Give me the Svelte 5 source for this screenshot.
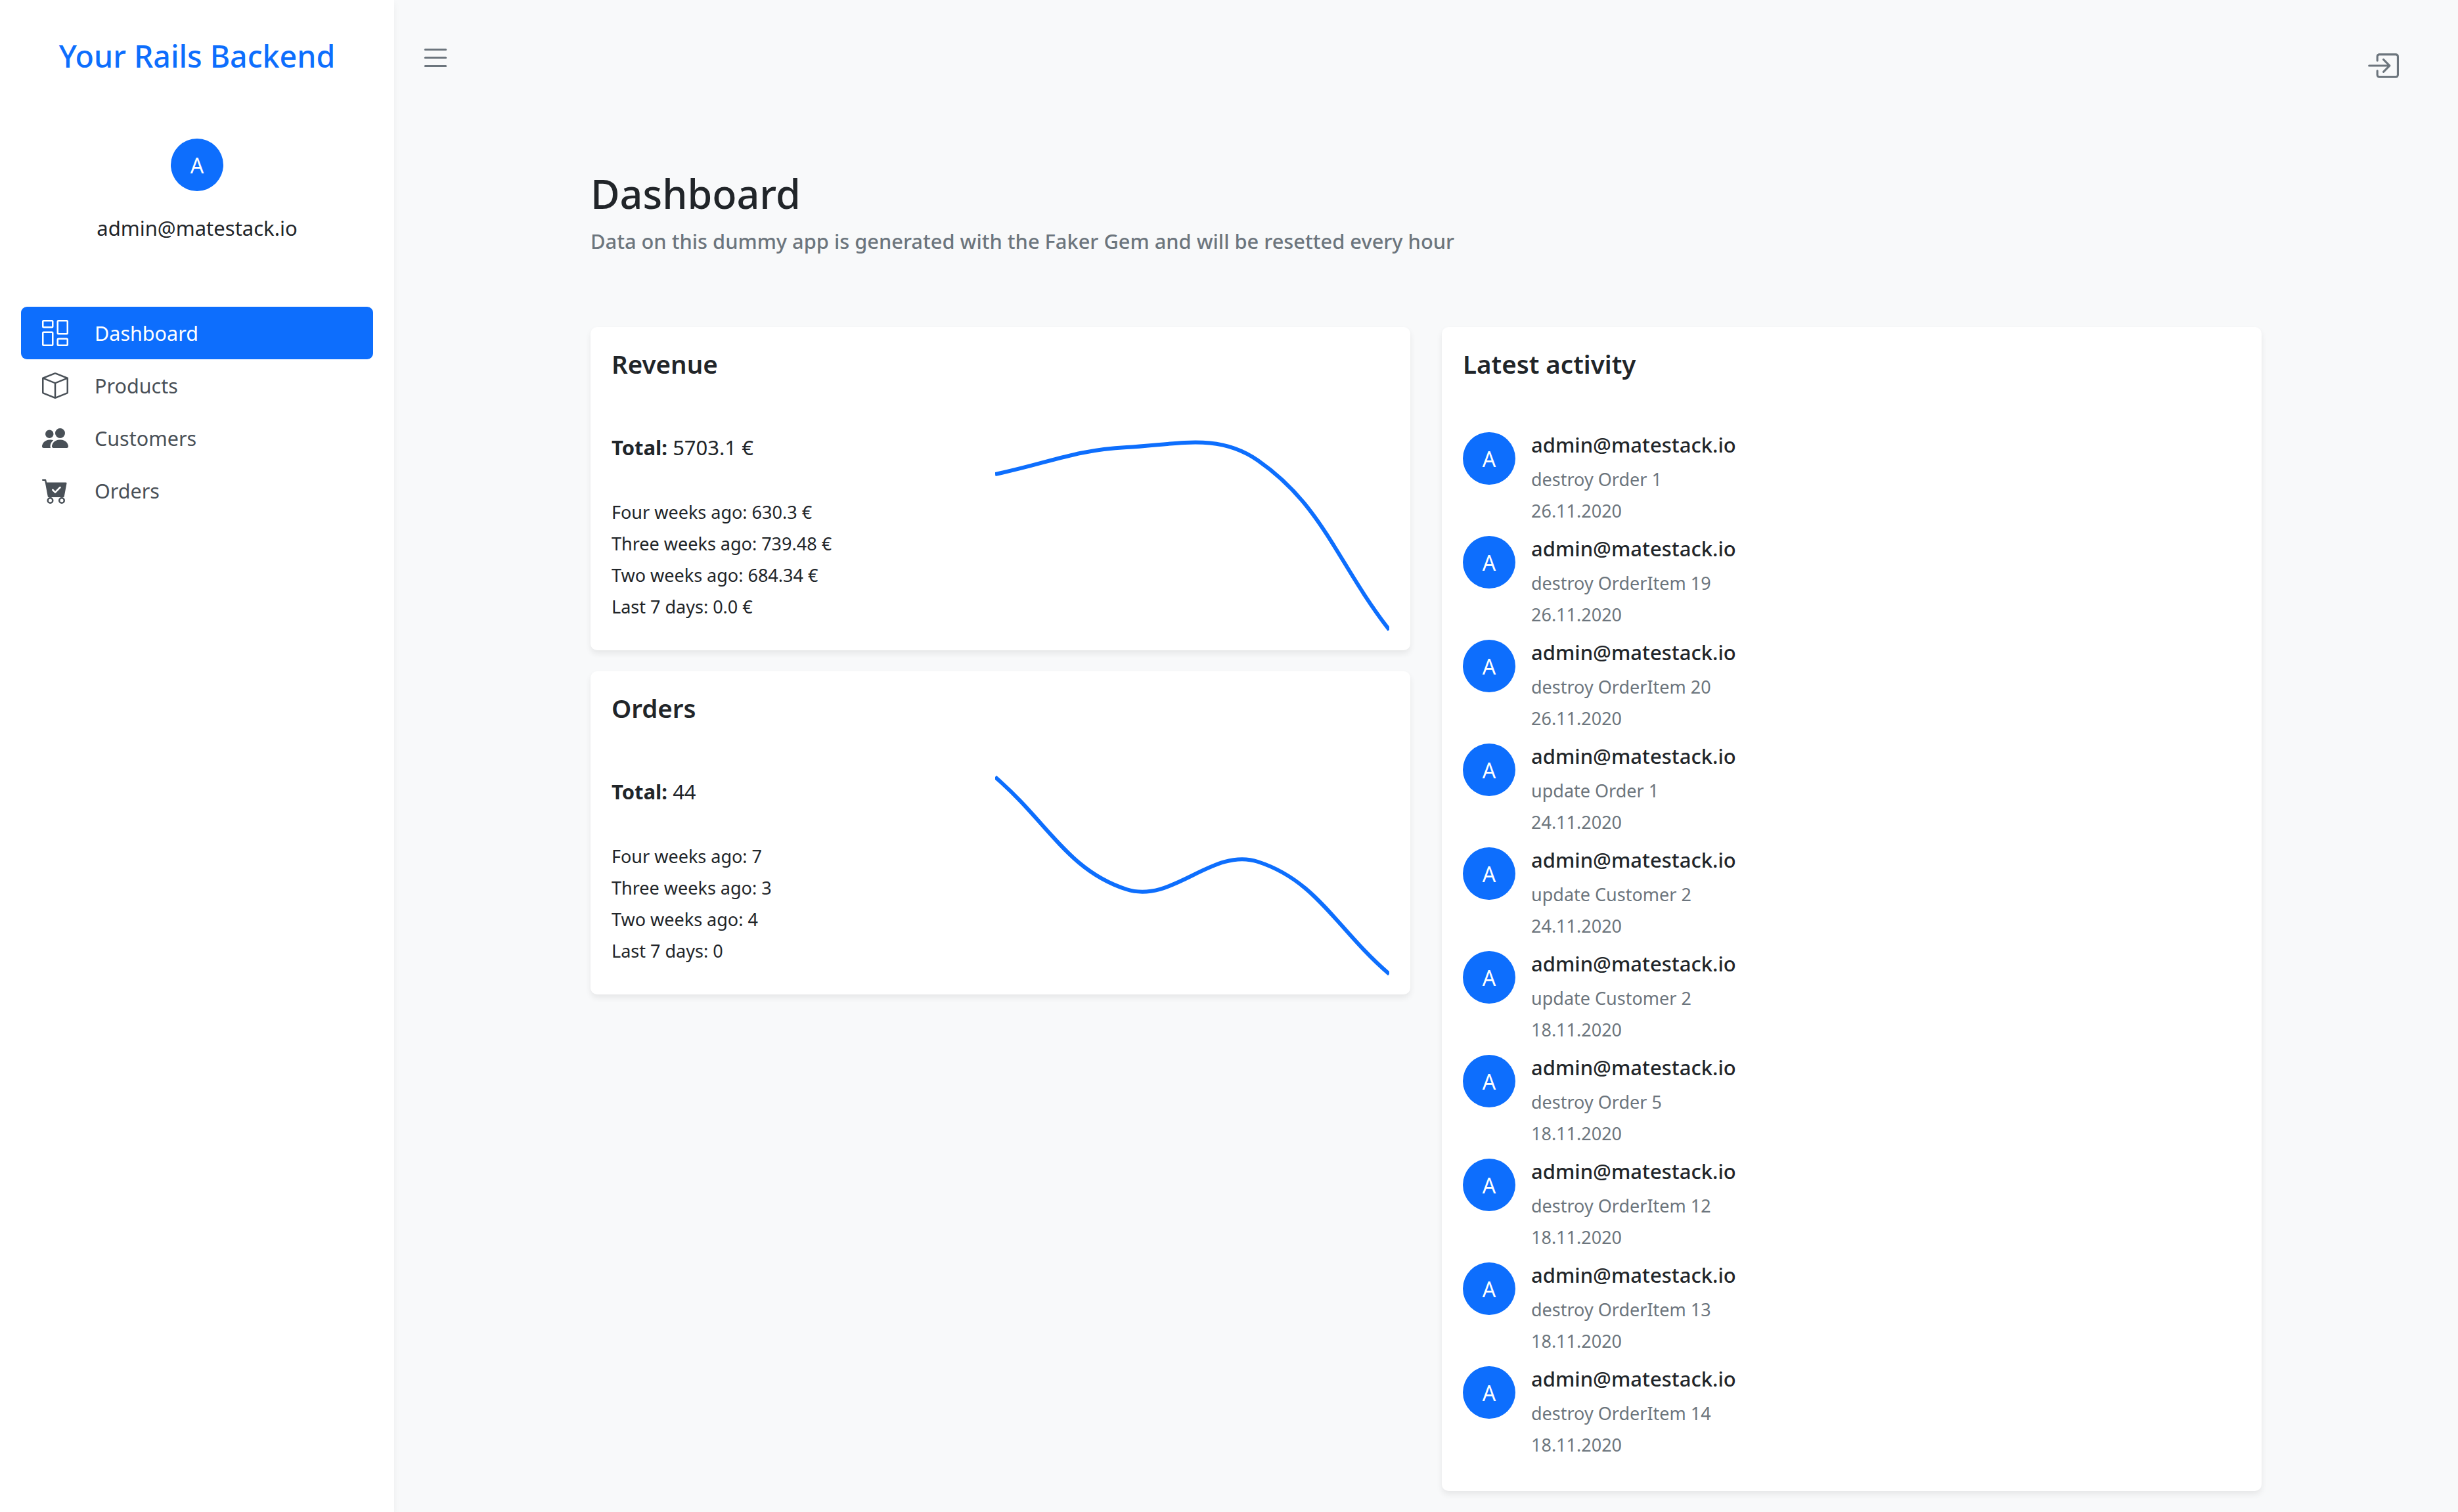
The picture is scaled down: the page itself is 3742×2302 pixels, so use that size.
<script>
  const navItems = [
    { label: "Dashboard", active: true, icon: "M6 1v3H1V1h5zM1 0a1 1 0 0 0-1 1v3a1 1 0 0 0 1 1h5a1 1 0 0 0 1-1V1a1 1 0 0 0-1-1H1zm14 12v3h-5v-3h5zm-5-1a1 1 0 0 0-1 1v3a1 1 0 0 0 1 1h5a1 1 0 0 0 1-1v-3a1 1 0 0 0-1-1h-5zM6 8v7H1V8h5zM1 7a1 1 0 0 0-1 1v7a1 1 0 0 0 1 1h5a1 1 0 0 0 1-1V8a1 1 0 0 0-1-1H1zm14-6v7h-5V1h5zm-5-1a1 1 0 0 0-1 1v7a1 1 0 0 0 1 1h5a1 1 0 0 0 1-1V1a1 1 0 0 0-1-1h-5z" },
    { label: "Products", icon: "M8.186 1.113a.5.5 0 0 0-.372 0L1.846 3.5 8 5.961 14.154 3.5 8.186 1.113zM15 4.239l-6.5 2.6v7.922l6.5-2.6V4.24zM7.5 14.762V6.838L1 4.239v7.925l6.5 2.6zM7.443.184a1.5 1.5 0 0 1 1.114 0l7.129 2.852A.5.5 0 0 1 16 3.5v8.662a1 1 0 0 1-.629.928l-7.185 2.874a.5.5 0 0 1-.372 0L.63 13.09a1 1 0 0 1-.63-.928V3.5a.5.5 0 0 1 .314-.464L7.443.184z" },
    { label: "Customers", icon: "M7 14s-1 0-1-1 1-4 5-4 5 3 5 4-1 1-1 1H7zm4-6a3 3 0 1 0 0-6 3 3 0 0 0 0 6zM5.216 14A2.238 2.238 0 0 1 5 13c0-1.355.68-2.75 1.936-3.72A6.325 6.325 0 0 0 5 9c-4 0-5 3-5 4s1 1 1 1h4.216zM4.5 8a2.5 2.5 0 1 0 0-5 2.5 2.5 0 0 0 0 5z" },
    { label: "Orders", icon: "M.5 1a.5.5 0 0 0 0 1h1.11l.401 1.607 1.498 7.985A.5.5 0 0 0 4 12h1a2 2 0 1 0 0 4 2 2 0 0 0 0-4h7a2 2 0 1 0 0 4 2 2 0 0 0 0-4h1a.5.5 0 0 0 .491-.408l1.5-8A.5.5 0 0 0 14.5 3H2.89l-.405-1.621A.5.5 0 0 0 2 1H.5zM6 14a1 1 0 1 1-2 0 1 1 0 0 1 2 0zm7 0a1 1 0 1 1-2 0 1 1 0 0 1 2 0zm-1.646-7.646-3 3a.5.5 0 0 1-.708 0l-1.5-1.5a.5.5 0 1 1 .708-.708L8 8.293l2.646-2.647a.5.5 0 0 1 .708.708z" }
  ];

  const listIcon = "M2.5 12a.5.5 0 0 1 .5-.5h10a.5.5 0 0 1 0 1H3a.5.5 0 0 1-.5-.5zm0-4a.5.5 0 0 1 .5-.5h10a.5.5 0 0 1 0 1H3a.5.5 0 0 1-.5-.5zm0-4a.5.5 0 0 1 .5-.5h10a.5.5 0 0 1 0 1H3a.5.5 0 0 1-.5-.5z";
  const loginIcon = "M6 3.5a.5.5 0 0 1 .5-.5h8a.5.5 0 0 1 .5.5v9a.5.5 0 0 1-.5.5h-8a.5.5 0 0 1-.5-.5v-2a.5.5 0 0 0-1 0v2A1.5 1.5 0 0 0 6.5 14h8a1.5 1.5 0 0 0 1.5-1.5v-9A1.5 1.5 0 0 0 14.5 2h-8A1.5 1.5 0 0 0 5 3.5v2a.5.5 0 0 0 1 0v-2zM11.854 8.354a.5.5 0 0 0 0-.708l-3-3a.5.5 0 1 0-.708.708L10.293 7.5H1.5a.5.5 0 0 0 0 1h8.793l-2.147 2.146a.5.5 0 0 0 .708.708l3-3z";

  const charts = [
    {
      title: "Revenue",
      total: "5703.1 €",
      rows: ["Four weeks ago: 630.3 €", "Three weeks ago: 739.48 €", "Two weeks ago: 684.34 €", "Last 7 days: 0.0 €"],
      ys: [82, 41, 61, 319]
    },
    {
      title: "Orders",
      total: "44",
      rows: ["Four weeks ago: 7", "Three weeks ago: 3", "Two weeks ago: 4", "Last 7 days: 0"],
      ys: [19, 190, 148, 319]
    }
  ];

  const activities = [
    ["destroy Order 1", "26.11.2020"],
    ["destroy OrderItem 19", "26.11.2020"],
    ["destroy OrderItem 20", "26.11.2020"],
    ["update Order 1", "24.11.2020"],
    ["update Customer 2", "24.11.2020"],
    ["update Customer 2", "18.11.2020"],
    ["destroy Order 5", "18.11.2020"],
    ["destroy OrderItem 12", "18.11.2020"],
    ["destroy OrderItem 13", "18.11.2020"],
    ["destroy OrderItem 14", "18.11.2020"]
  ];

  // same spline the chart library draws: tension 0.4 between evenly spaced points
  function linePath(ys) {
    const pts = ys.map((y, i) => ({ x: i * 200, y }));
    const t = 0.4;
    const ctrl = pts.map((p, i) => {
      const prev = pts[i - 1] || p;
      const next = pts[i + 1] || p;
      const d01 = Math.hypot(p.x - prev.x, p.y - prev.y);
      const d12 = Math.hypot(next.x - p.x, next.y - p.y);
      const sum = d01 + d12;
      const fa = (t * d01) / sum;
      const fb = (t * d12) / sum;
      return {
        inX: p.x - fa * (next.x - prev.x),
        inY: p.y - fa * (next.y - prev.y),
        outX: p.x + fb * (next.x - prev.x),
        outY: p.y + fb * (next.y - prev.y)
      };
    });
    let d = `M${pts[0].x} ${pts[0].y}`;
    for (let i = 1; i < pts.length; i++) {
      d += ` C${ctrl[i - 1].outX} ${ctrl[i - 1].outY} ${ctrl[i].inX} ${ctrl[i].inY} ${pts[i].x} ${pts[i].y}`;
    }
    return d;
  }
</script>

<div class="layout">
  <aside class="sidebar">
    <div class="brand">Your Rails Backend</div>
    <div class="avatar user-avatar">A</div>
    <div class="user-mail">admin@matestack.io</div>
    <nav>
      {#each navItems as item}
        <a class="nav-link" class:active={item.active} href="#top">
          <svg class="nav-icon" viewBox="0 0 16 16" fill="currentColor"><path d={item.icon} /></svg>
          <span>{item.label}</span>
        </a>
      {/each}
    </nav>
  </aside>

  <div class="main">
    <header class="topbar">
      <svg class="menu-icon" viewBox="0 0 16 16" fill="currentColor"><path fill-rule="evenodd" d={listIcon} /></svg>
      <svg class="login-icon" viewBox="0 0 16 16" fill="currentColor"><path fill-rule="evenodd" d={loginIcon} /></svg>
    </header>

    <main class="content">
      <h1>Dashboard</h1>
      <p class="subtitle">Data on this dummy app is generated with the Faker Gem and will be resetted every hour</p>

      <div class="columns">
        <div class="stack">
          {#each charts as chart}
            <section class="card chart-card">
              <h2>{chart.title}</h2>
              <div class="chart-body">
                <div class="stats">
                  <p class="total"><b>Total:</b> {chart.total}</p>
                  {#each chart.rows as row}
                    <p class="row">{row}</p>
                  {/each}
                </div>
                <svg class="chart" viewBox="0 0 600 330">
                  <path d={linePath(chart.ys)} fill="none" stroke="#0d6efd" stroke-width="6" />
                </svg>
              </div>
            </section>
          {/each}
        </div>

        <section class="card activity-card">
          <h2>Latest activity</h2>
          <ul>
            {#each activities as [action, date]}
              <li>
                <div class="avatar">A</div>
                <div class="activity-text">
                  <div class="who">admin@matestack.io</div>
                  <div class="what">{action}</div>
                  <div class="when">{date}</div>
                </div>
              </li>
            {/each}
          </ul>
        </section>
      </div>
    </main>
  </div>
</div>

<style>
  :global(body) {
    margin: 0;
    background: #f8f9fa;
  }

  .layout {
    display: flex;
    min-height: 100vh;
    font-family: "Noto Sans", "Open Sans", sans-serif;
    font-size: 31px;
    color: #212529;
  }

  .sidebar {
    width: 600px;
    flex-shrink: 0;
    box-sizing: border-box;
    padding: 0 32px;
    background: #fff;
    box-shadow: 0 5px 10px rgba(0, 0, 0, 0.05);
    display: flex;
    flex-direction: column;
  }

  .brand {
    height: 170px;
    line-height: 170px;
    text-align: center;
    font-size: 46.5px;
    font-weight: 500;
    color: #0d6efd;
  }

  .avatar {
    width: 80px;
    height: 80px;
    border-radius: 50%;
    flex-shrink: 0;
    background: #0d6efd;
    color: #fff;
    display: flex;
    align-items: center;
    justify-content: center;
    font-size: 32px;
  }

  .user-avatar {
    margin: 41px auto 0;
  }

  .user-mail {
    margin-top: 32px;
    line-height: 48px;
    text-align: center;
    font-size: 31px;
  }

  nav {
    margin-top: 96px;
    display: flex;
    flex-direction: column;
    font-size: 30.5px;
  }

  .nav-link {
    height: 80px;
    padding-left: 32px;
    border-radius: 9px;
    display: flex;
    align-items: center;
    gap: 40px;
    color: #495057;
    text-decoration: none;
  }

  .nav-link.active {
    background: #0d6efd;
    color: #fff;
  }

  .nav-icon {
    width: 40px;
    height: 40px;
    flex-shrink: 0;
  }

  .main {
    flex: 1;
    min-width: 0;
  }

  .topbar {
    height: 255px;
    box-sizing: border-box;
    padding: 63px 90px 0 38px;
    display: flex;
    justify-content: space-between;
    align-items: flex-start;
    color: #6c757d;
  }

  .menu-icon,
  .login-icon {
    width: 50px;
    height: 50px;
  }

  .login-icon {
    margin-top: 12px;
  }

  .content {
    padding: 0 299px 32px 299px;
  }

  h1 {
    margin: 0;
    font-size: 61px;
    line-height: 80px;
    font-weight: 500;
  }

  .subtitle {
    margin: 8px 0 107px;
    line-height: 48px;
    font-size: 30.8px;
    font-weight: 500;
    color: #6c757d;
  }

  .columns {
    display: grid;
    grid-template-columns: 1248px 1248px;
    gap: 48px;
    align-items: start;
  }

  .stack {
    display: flex;
    flex-direction: column;
    gap: 32px;
  }

  .card {
    background: #fff;
    border-radius: 10px;
    box-shadow: 0 5px 10px rgba(0, 0, 0, 0.075);
    padding: 32px;
    box-sizing: border-box;
  }

  h2 {
    margin: 0;
    font-size: 38.5px;
    line-height: 48px;
    font-weight: 600;
  }

  .chart-card {
    padding-bottom: 20px;
  }

  .chart-body {
    margin-top: 62px;
    display: flex;
    justify-content: space-between;
  }

  .stats {
    padding-top: 17px;
    font-size: 27px;
  }

  .stats p {
    margin: 0;
    line-height: 48px;
  }

  .total {
    font-size: 31px;
    margin-bottom: 51px !important;
  }

  .chart {
    width: 600px;
    height: 330px;
    overflow: hidden;
  }

  .activity-card {
    padding-bottom: 37px;
  }

  ul {
    list-style: none;
    margin: 75px 0 0;
    padding: 0;
  }

  li {
    height: 158px;
    display: flex;
    gap: 24px;
  }

  li .avatar {
    margin-top: 5px;
  }

  .who {
    line-height: 48px;
    font-size: 31px;
    font-weight: 500;
  }

  .what,
  .when {
    line-height: 48px;
    font-size: 27px;
    color: #6c757d;
  }

  .what {
    margin-top: 5px;
  }
</style>
